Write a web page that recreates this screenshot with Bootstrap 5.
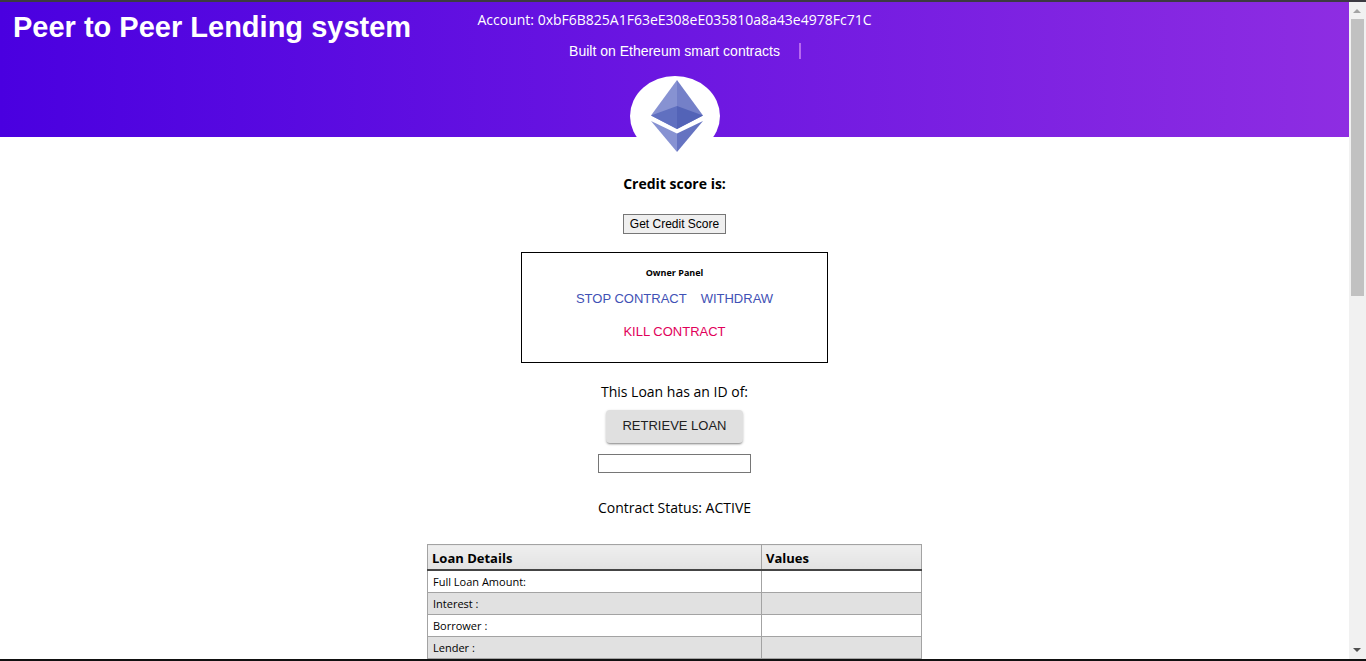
<!DOCTYPE html>
<html lang="en">
<head>
<meta charset="utf-8">
<meta name="viewport" content="width=device-width, initial-scale=1">
<title>Peer to Peer Lending system</title>
<link href="https://cdn.jsdelivr.net/npm/bootstrap@5.3.0/dist/css/bootstrap.min.css" rel="stylesheet">
<style>
  body { font-family: "Open Sans", "Noto Sans", sans-serif; font-size: 14px; line-height: 24px; color: #000; background: #fff; }
  .arial { font-family: "Liberation Sans", Arial, sans-serif; }
  .window { border-top: 2px solid #3c3a42; border-bottom: 2px solid #111; }
  .hero { background: linear-gradient(to right, #4a00e0, #8e2de2); color: #fff; }
  .hero-title { font-size: 29px; line-height: 34px; padding: 8px 0 0 13px; }
  .hero-account { padding-top: 6px; }
  .typed { margin-top: 7px; }
  .caret { width: 2px; height: 16px; background: #b768f0; margin-left: 19px; }
  .eth { width: 90px; height: 80px; margin: 13px 0 -19px; }
  .score { margin-top: 35px; }
  .btn-native { font-size: 12px; line-height: 16px; padding: 1px 6px; border: 1px solid #767676; border-radius: 0; background: #efefef; color: #000; margin-top: 18px; }
  .owner { width: 307px; height: 111px; border: 1px solid #000; margin-top: 18px; padding-top: 12px; }
  .owner-title { font-size: 9px; line-height: 16px; }
  .btn-flat { font-size: 13px; line-height: 17px; padding: 8px 7px; border: 0; border-radius: 4px; color: #3f51b5; }
  .btn-kill { color: #e1005a; }
  .owner-actions { margin-top: 1px; }
  .loan-id { margin-top: 17px; }
  .btn-raised { font-size: 13px; line-height: 17px; padding: 7px 16px 9px; border: 0; border-radius: 4px; background: #e0e0e0; color: #212121; margin-top: 6px; box-shadow: 0 2px 2px -1px rgba(0,0,0,.35), 0 1px 3px rgba(0,0,0,.2); }
  .loan-input { width: 153px; height: 19px; border: 1px solid #767676; border-radius: 0; padding: 1px 2px; margin-top: 11px; }
  .status { margin-top: 23px; }
  .loan-table { width: 495px; table-layout: fixed; margin-top: 24px; border-collapse: collapse; }
  .loan-table th, .loan-table td { border: 1px solid #a3a3a3; padding: 0 5px; }
  .loan-table th { line-height: 22px; height: 24px; font-size: 13px; background: linear-gradient(#efefef, #e2e2e2); border-bottom: 2px solid #444; padding: 2px 4px 0; }
  .loan-table td { font-size: 11px; line-height: 21px; height: 22px; }
  .loan-table tbody tr:nth-child(even) { background: #e1e1e1; }
  .loan-table .name-col { width: 334px; }
  .scroll-rail { width: 17px; background: #f1f1f1; padding: 0 2px 0 1px; }
  .scroll-rail svg { width: 14px; height: 17px; }
  .scroll-thumb { height: 277px; width: 13px; background: #c1c1c1; }
</style>
</head>
<body>
<div class="window d-flex vh-100 overflow-hidden">
  <main class="flex-grow-1 overflow-hidden">
    <header class="hero">
      <div class="row g-0">
        <div class="col"><h1 class="hero-title arial fw-bold mb-0 text-nowrap">Peer to Peer Lending system</h1></div>
        <div class="col-auto d-flex flex-column align-items-center">
          <div class="hero-account">Account: 0xbF6B825A1F63eE308eE035810a8a43e4978Fc71C</div>
          <div class="typed arial d-flex align-items-center position-relative">
            <span>Built on Ethereum smart contracts</span>
            <span class="caret position-absolute start-100"></span>
          </div>
          <svg class="eth" viewBox="0 0 90 80" role="img" aria-label="Ethereum">
            <ellipse cx="45" cy="40" rx="45" ry="40" fill="#fff"/>
            <path d="M47 4 21 39.500 47 53z" fill="#8792d2"/>
            <path d="M47 4 73 39.500 47 53z" fill="#7480c8"/>
            <path d="M47 30 21 39.500 47 53z" fill="#6070c0"/>
            <path d="M47 30 73 39.500 47 53z" fill="#5363b7"/>
            <path d="M21 45 47 57.500V76z" fill="#8792d2"/>
            <path d="M73 45 47 57.500V76z" fill="#6573c1"/>
          </svg>
        </div>
        <div class="col"></div>
      </div>
    </header>

    <div class="d-flex flex-column align-items-center">
      <div class="score fw-bold">Credit score is:</div>
      <button type="button" class="btn btn-native arial">Get Credit Score</button>
      <section class="owner text-center">
        <h2 class="owner-title fw-bold mb-0">Owner Panel</h2>
        <div class="owner-actions d-flex justify-content-center">
          <button type="button" class="btn btn-flat arial">STOP CONTRACT</button>
          <button type="button" class="btn btn-flat arial">WITHDRAW</button>
        </div>
        <button type="button" class="btn btn-flat btn-kill arial">KILL CONTRACT</button>
      </section>
      <label class="loan-id" for="loanId">This Loan has an ID of:</label>
      <button type="button" class="btn btn-raised arial">RETRIEVE LOAN</button>
      <input type="text" id="loanId" class="loan-input">
      <div class="status">Contract Status: ACTIVE</div>
      <table class="loan-table">
        <thead>
          <tr><th class="name-col" scope="col">Loan Details</th><th scope="col">Values</th></tr>
        </thead>
        <tbody>
          <tr><td>Full Loan Amount:</td><td></td></tr>
          <tr><td>Interest :</td><td></td></tr>
          <tr><td>Borrower :</td><td></td></tr>
          <tr><td>Lender :</td><td></td></tr>
        </tbody>
      </table>
    </div>
  </main>
  <div class="scroll-rail d-flex flex-column align-items-center flex-shrink-0" aria-hidden="true">
    <svg viewBox="0 0 14 17"><path d="M3 11h8L7 7z" fill="#a3a3a3"/></svg>
    <div class="scroll-thumb"></div>
    <svg class="mt-auto" viewBox="0 0 14 17"><path d="M3 6h8l-4 4z" fill="#505050"/></svg>
  </div>
</div>
<script src="https://cdn.jsdelivr.net/npm/bootstrap@5.3.0/dist/js/bootstrap.bundle.min.js"></script>
</body>
</html>
